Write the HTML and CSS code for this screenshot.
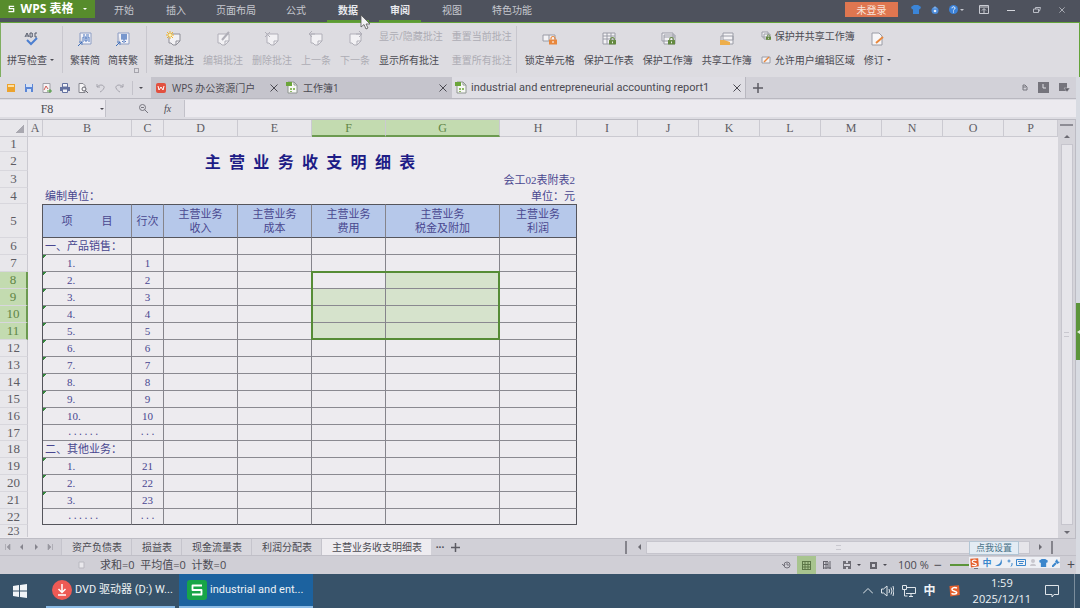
FILE: index.html
```html
<!DOCTYPE html>
<html lang="zh-CN">
<head>
  <meta charset="UTF-8">
  <meta name="viewport" content="width=device-width, initial-scale=1.0">
  <title>WPS 表格</title>
  <link rel="stylesheet" href="styles.css">
</head>
<body>
<svg class="sprite" aria-hidden="true">
  <symbol id="i-note" viewBox="0 0 16 16">
    <path d="M3 3h11v7l-4 4H7l-2-2H3z" fill="#f2f1f4" stroke="currentColor"/>
    <path d="M14 10h-4v4" fill="none" stroke="currentColor"/>
  </symbol>
  <symbol id="i-lock" viewBox="0 0 8 9">
    <path d="M2 4V3a2 2 0 0 1 4 0v1" fill="none" stroke="currentColor" stroke-width="1.2"/>
    <path d="M0 4h8v5H0z" fill="currentColor"/>
    <path d="M3.5 5.5h1v2h-1z" fill="#fff"/>
  </symbol>
  <symbol id="i-close" viewBox="0 0 8 8">
    <path d="M.5.5l7 7M7.5.5l-7 7" stroke="currentColor" fill="none"/>
  </symbol>
  <symbol id="i-sheet" viewBox="0 0 12 13">
    <path d="M2 1h6l3 3v8H2z" fill="#f7f8f5" stroke="#8f9690"/>
    <path d="M8 1v3h3" fill="none" stroke="#8f9690"/>
    <path d="M0 1h6v4H0z" fill="#6ba53a"/>
    <path d="M4 7h2v2H4zM7 7h2v2H7zM4 10h2v1H4z" fill="#8ebb62"/>
  </symbol>
  <symbol id="i-sogou" viewBox="0 0 12 12">
    <path d="M1.500 1l9.500-.8.800 9.800-9.500 1.500z" fill="#e5602d"/>
    <path d="M9 3C6 2 3.500 3 4 4.700S9 6 8.800 7.700 5.500 9.500 3.500 8.300" fill="none" stroke="#fff" stroke-width="1.500"/>
  </symbol>
</svg>

<header class="titlebar">
  <button class="brand"><svg class="brand-logo" viewBox="0 0 8 8"><path d="M7 1H1.500v2.500h5V7H.500" fill="none" stroke="#fff" stroke-width="1.400"/></svg>WPS 表格<i class="caret"></i></button>
  <nav class="menu">
    <button>开始</button>
    <button>插入</button>
    <button class="wide">页面布局</button>
    <button>公式</button>
    <button class="lit">数据</button>
    <button class="lit">审阅</button>
    <button>视图</button>
    <button class="wide">特色功能</button>
  </nav>
  <button class="login">未登录</button>
  <div class="title-tools">
    <button aria-label="皮肤"><svg width="10" height="9" viewBox="0 0 10 9"><path d="M3 0h4l3 2-1 2.500-1-.5v5H2V4l-1 .5L0 2z" fill="#3b85d8"/></svg></button>
    <button aria-label="云服务"><svg width="8" height="8" viewBox="0 0 8 8"><circle cx="4" cy="4.500" r="3.500" fill="#4b8ad8"/><path d="M2 2.500L4 0l2 2.500z" fill="#7fb0ea"/><circle cx="4" cy="5" r="1.300" fill="#e6effa"/></svg></button>
    <button aria-label="帮助" class="help"><svg width="9" height="9" viewBox="0 0 9 9"><circle cx="4.500" cy="4.500" r="4.500" fill="#3c82d8"/><path d="M3 3.300c0-2 3-2 3 0 0 1-1.500 1-1.500 2.200M4.500 6.500v1" stroke="#fff" fill="none"/></svg><i class="caret"></i></button>
  </div>
  <div class="window-tools">
    <button aria-label="隐藏功能区"><svg width="10" height="9" viewBox="0 0 10 9"><path d="M.500.500h9v8h-9zM.500 2h9M5 8V4M3 5.500L5 3.500l2 2" fill="none" stroke="#c9cbd2"/></svg></button>
    <button aria-label="最小化"><svg width="8" height="8" viewBox="0 0 8 8"><path d="M0 4.500h8" stroke="#d4d6dc"/></svg></button>
    <button aria-label="还原"><svg width="8" height="6" viewBox="0 0 8 6"><path d="M2.500 2V.500h5L6.500 4H5M.500 2h5v3.500h-5z" fill="none" stroke="#b9bcc5"/></svg></button>
    <button aria-label="关闭"><svg width="6" height="6"><use href="#i-close"/></svg></button>
  </div>
  <svg class="pointer" viewBox="0 0 11 16"><path d="M1 1v12l3-2.500L6 15l2-1-2-4h4z" fill="#f3f3f5" stroke="#555" stroke-width=".8"/></svg>
</header>

<section class="ribbon">
  <div class="group">
    <button class="tool"><svg viewBox="0 0 16 16"><path d="M2 6l2-4 2 4M3 5h2M7 2v4h2q1-1 0-2 1-1 0-2H7M14 2h-2v4h2" fill="none" stroke="#555b6b"/><path d="M4 9l4 4 6-6" fill="none" stroke="#4c7fd0" stroke-width="2"/></svg><span>拼写检查<i class="caret"></i></span></button>
  </div>
  <div class="group convert">
    <button class="tool"><svg viewBox="0 0 16 16"><path d="M3 2h11v11H6M3 2v8" fill="#f2f2f8" stroke="#8d9ec4"/><path d="M6 4h2M9 4h3M6 6h6M6 6v5M12 6v5M8 7h2v3H8z" fill="none" stroke="#4f78bf"/><path d="M1 15l4-4M2 11h3v3" fill="none" stroke="#3d6db8"/></svg><span>繁转简</span></button>
    <button class="tool"><svg viewBox="0 0 16 16"><path d="M3 2h11v11H6M3 2v8" fill="#f2f2f8" stroke="#8d9ec4"/><path d="M6 4h6M6 6h6M6 8h6M9 3v9M7 3v5M11 3v5M7 11l1-1M11 11l-1-1" fill="none" stroke="#4f78bf"/><path d="M1 15l4-4M2 11h3v3" fill="none" stroke="#3d6db8"/></svg><span>简转繁</span></button>
    <i class="launcher"></i>
  </div>
  <div class="group notes">
    <button class="tool"><svg viewBox="0 0 16 16"><use href="#i-note"/><path d="M4 0v8M0 4h8M1 1l6 6M7 1L1 7" stroke="#f0b52c"/><circle cx="4" cy="4" r="1.500" fill="#fff3ae"/></svg><span>新建批注</span></button>
    <button class="tool" disabled><svg viewBox="0 0 16 16"><use href="#i-note"/><path d="M7 9l7-8" stroke="currentColor" stroke-width="2"/></svg><span>编辑批注</span></button>
    <button class="tool" disabled><svg viewBox="0 0 16 16"><use href="#i-note"/><path d="M1 1l5 5M6 1L1 6" stroke="currentColor"/></svg><span>删除批注</span></button>
    <button class="tool" disabled><svg viewBox="0 0 16 16"><use href="#i-note"/><path d="M1 3h6M1 3l3-3M1 3l3 3" stroke="currentColor"/></svg><span>上一条</span></button>
    <button class="tool" disabled><svg viewBox="0 0 16 16"><use href="#i-note"/><path d="M9 3h6M15 3l-3-3M15 3l-3 3" stroke="currentColor"/></svg><span>下一条</span></button>
    <div class="stack">
      <button disabled>显示/隐藏批注</button>
      <button>显示所有批注</button>
    </div>
    <div class="stack">
      <button disabled>重置当前批注</button>
      <button disabled>重置所有批注</button>
    </div>
  </div>
  <div class="group protect">
    <button class="tool"><svg viewBox="0 0 16 16"><path d="M1 4h12v6H1zM7 4v6" fill="#f4f3f6" stroke="#9a9ca6"/><use href="#i-lock" x="7" y="4" width="8" height="10" color="#e8873c"/></svg><span>锁定单元格</span></button>
    <button class="tool"><svg viewBox="0 0 16 16"><path d="M2 2h12v11H2zM2 5h12M2 8h12M6 2v11M10 2v11" fill="#f4f3f6" stroke="#9a9ca6"/><use href="#i-lock" x="8" y="5" width="7" height="9" color="#63893f"/></svg><span>保护工作表</span></button>
    <button class="tool"><svg viewBox="0 0 16 16"><path d="M2 2h11v8H2zM4 4h11v9H4zM4 6h11" fill="#f4f3f6" stroke="#9a9ca6"/><use href="#i-lock" x="8" y="5" width="7" height="9" color="#63893f"/></svg><span>保护工作簿</span></button>
    <button class="tool"><svg viewBox="0 0 16 16"><path d="M4 2h10v7H4zM2 5h12v8H2z" fill="#f4f3f6" stroke="#9a9ca6"/><path d="M1 9h4l6 2v3H1z" fill="#edae4b"/></svg><span>共享工作簿</span></button>
    <div class="stack">
      <button><svg viewBox="0 0 10 10"><path d="M1 1h6v5H1zM3 3h6v5H3z" fill="#f4f3f6" stroke="#9a9ca6"/><use href="#i-lock" x="5" y="3" width="5" height="6" color="#63893f"/></svg>保护并共享工作簿</button>
      <button><svg viewBox="0 0 10 10"><path d="M1 2h8v6H1z" fill="#f4f3f6" stroke="#9a9ca6"/><path d="M3 7l5-5" stroke="#e8873c" stroke-width="1.500"/></svg>允许用户编辑区域</button>
    </div>
    <button class="tool"><svg viewBox="0 0 16 16"><path d="M3 2h7l3 3v9H3z" fill="#f7f6f8" stroke="#9a9ca6"/><path d="M7 12l7-6" stroke="#e8873c" stroke-width="2"/></svg><span>修订<i class="caret"></i></span></button>
  </div>
</section>

<div class="workspace">
  <main class="book">
    <div class="docbar">
      <div class="quick">
        <button aria-label="打开"><svg viewBox="0 0 10 10"><path d="M1 1h8v8H1z" fill="#eca32e"/><path d="M2 2h6v2H2z" fill="#fbe0a6"/></svg></button>
        <button aria-label="保存"><svg viewBox="0 0 10 10"><path d="M1 1h8v8H1z" fill="#5b86d6"/><path d="M2 1h6v3H2zM3 6h4v3H3z" fill="#d5e0f4"/></svg></button>
        <button aria-label="输出为PDF"><svg viewBox="0 0 10 10"><path d="M1 .500h7v9H1z" fill="#f6f3f5" stroke="#a0a0a8"/><path d="M2 7l2-4 2 3" fill="none" stroke="#cf5b54"/><path d="M5 8h5M8 6v4" stroke="#4c9b3d"/></svg></button>
        <button aria-label="打印"><svg viewBox="0 0 10 10"><path d="M0 4h10v4H0z" fill="#6472a0"/><path d="M2.500.500h5V4h-5zM2.500 6h5v3.500h-5z" fill="#f2f3f8" stroke="#6472a0"/></svg></button>
        <button aria-label="打印预览"><svg viewBox="0 0 10 10"><path d="M1 .500h4l2 2v7H1z" fill="#f5f4f6" stroke="#86868e"/><circle cx="6" cy="6" r="2" fill="#f5f4f6" stroke="#66666e"/><path d="M7.500 7.500L10 10" stroke="#66666e"/></svg></button>
        <button aria-label="撤销"><svg viewBox="0 0 10 10"><path d="M1 4c4-4 8-1 7 1S6 8 4 9M1 1v3h3" fill="none" stroke="#a5a4ad"/></svg></button>
        <button aria-label="恢复"><svg viewBox="0 0 10 10"><path d="M9 4C5 0 1 3 2 5s2 3 4 4M9 1v3H6" fill="none" stroke="#a5a4ad"/></svg></button>
        <button class="more" aria-label="更多"><i class="caret"></i></button>
      </div>
      <div class="doc-tab portal"><svg width="10" height="10" viewBox="0 0 10 10"><rect width="10" height="10" rx="2" fill="#e2503f"/><path d="M2 3l1 4 2-3 2 3 1-4" fill="none" stroke="#fff"/></svg><a href="#">WPS 办公资源门户</a><button aria-label="关闭"><svg width="8" height="8"><use href="#i-close"/></svg></button></div>
      <div class="doc-tab book1"><svg width="12" height="13"><use href="#i-sheet"/></svg><a href="#">工作簿1</a><button aria-label="关闭"><svg width="8" height="8"><use href="#i-close"/></svg></button></div>
      <div class="doc-tab active"><svg width="12" height="13"><use href="#i-sheet"/></svg><a href="#">industrial and entrepreneurial accounting report1</a><button aria-label="关闭"><svg width="8" height="8"><use href="#i-close"/></svg></button></div>
      <button class="new-doc" aria-label="新建"><svg width="10" height="10" viewBox="0 0 10 10"><path d="M5 0v10M0 5h10" stroke="#5c5b63" stroke-width="1.500"/></svg></button>
      <div class="doc-tools">
        <svg width="6" height="7" viewBox="0 0 6 7"><path d="M1 1h2l2 2v3H1zM1 3h3" fill="none" stroke="#77767e"/></svg>
        <svg width="11" height="11" viewBox="0 0 11 11"><path d="M0 0h11v11H0z" fill="#75747c"/><path d="M5 2v4h3" fill="none" stroke="#e2e1e6"/></svg>
        <svg width="11" height="10" viewBox="0 0 11 10"><path d="M0 0h8v8H0z" fill="#75747c"/><path d="M5 5h6l-3 4z" fill="#5e5d65" stroke="#d5d4da" stroke-width=".5"/></svg>
      </div>
    </div>

    <div class="formula">
      <div class="name-box"><input aria-label="名称框" value="F8"><i class="caret"></i></div>
      <div class="fx">
        <button aria-label="查找"><svg width="9" height="9" viewBox="0 0 9 9"><circle cx="3.500" cy="3.500" r="3" fill="none" stroke="#77767f"/><path d="M2 3.500h3M5.500 5.500L9 9" stroke="#77767f"/></svg></button>
        <button class="fn">fx</button>
      </div>
      <input class="formula-input" aria-label="编辑栏">
    </div>

    <div class="grid-area">
      <div class="grid">
        <table>
          <colgroup>
            <col class="c-head"><col class="c-a"><col class="c-b"><col class="c-c"><col class="c-d"><col class="c-d"><col class="c-d"><col class="c-g"><col class="c-h">
            <col span="7" class="c-i"><col>
          </colgroup>
          <thead>
            <tr><th class="corner"></th><th>A</th><th>B</th><th>C</th><th>D</th><th>E</th><th class="picked">F</th><th class="picked">G</th><th>H</th><th>I</th><th>J</th><th>K</th><th>L</th><th>M</th><th>N</th><th>O</th><th>P</th></tr>
          </thead>
          <tbody class="caption">
            <tr class="r1"><th>1</th><td></td><td colspan="7"></td></tr>
            <tr class="r2"><th>2</th><td></td><td colspan="7" class="sheet-title">主&nbsp; 营&nbsp; 业&nbsp; 务&nbsp; 收&nbsp; 支&nbsp; 明&nbsp; 细&nbsp; 表</td></tr>
            <tr><th>3</th><td></td><td colspan="7" class="right">会工02表附表2</td></tr>
            <tr class="r4"><th>4</th><td></td><td colspan="3" class="left">编制单位：</td><td colspan="4" class="right">单位：元</td></tr>
          </tbody>
          <tbody class="ledger">
            <tr class="fields"><th>5</th><td></td><td>项<i class="blank"></i>目</td><td>行次</td><td>主营业务<br>收入</td><td>主营业务<br>成本</td><td>主营业务<br>费用</td><td>主营业务<br>税金及附加</td><td>主营业务<br>利润</td></tr>
            <tr><th>6</th><td></td><td class="section">一、产品销售：</td><td></td><td></td><td></td><td></td><td></td><td></td></tr>
            <tr><th>7</th><td></td><td class="item flag">1.</td><td>1</td><td></td><td></td><td></td><td></td><td></td></tr>
            <tr><th class="picked">8</th><td></td><td class="item flag">2.</td><td>2</td><td></td><td></td><td class="current"><div class="range"></div></td><td class="in-range"></td><td></td></tr>
            <tr><th class="picked">9</th><td></td><td class="item flag">3.</td><td>3</td><td></td><td></td><td class="in-range"></td><td class="in-range"></td><td></td></tr>
            <tr><th class="picked">10</th><td></td><td class="item flag">4.</td><td>4</td><td></td><td></td><td class="in-range"></td><td class="in-range"></td><td></td></tr>
            <tr><th class="picked">11</th><td></td><td class="item flag">5.</td><td>5</td><td></td><td></td><td class="in-range"></td><td class="in-range"></td><td></td></tr>
            <tr><th>12</th><td></td><td class="item flag">6.</td><td>6</td><td></td><td></td><td></td><td></td><td></td></tr>
            <tr><th>13</th><td></td><td class="item flag">7.</td><td>7</td><td></td><td></td><td></td><td></td><td></td></tr>
            <tr><th>14</th><td></td><td class="item flag">8.</td><td>8</td><td></td><td></td><td></td><td></td><td></td></tr>
            <tr><th>15</th><td></td><td class="item flag">9.</td><td>9</td><td></td><td></td><td></td><td></td><td></td></tr>
            <tr><th>16</th><td></td><td class="item flag">10.</td><td>10</td><td></td><td></td><td></td><td></td><td></td></tr>
            <tr class="etc"><th>17</th><td></td><td class="item">......</td><td>...</td><td></td><td></td><td></td><td></td><td></td></tr>
            <tr><th>18</th><td></td><td class="section">二、其他业务：</td><td></td><td></td><td></td><td></td><td></td><td></td></tr>
            <tr><th>19</th><td></td><td class="item flag">1.</td><td>21</td><td></td><td></td><td></td><td></td><td></td></tr>
            <tr><th>20</th><td></td><td class="item flag">2.</td><td>22</td><td></td><td></td><td></td><td></td><td></td></tr>
            <tr><th>21</th><td></td><td class="item flag">3.</td><td>23</td><td></td><td></td><td></td><td></td><td></td></tr>
            <tr class="etc"><th>22</th><td></td><td class="item">......</td><td>...</td><td></td><td></td><td></td><td></td><td></td></tr>
          </tbody>
          <tbody class="tail">
            <tr><th>23</th></tr>
          </tbody>
        </table>
      </div>
      <div class="vscroll">
        <i class="split"></i>
        <i class="arrow up"></i>
        <div class="thumb"><i class="grip"></i></div>
        <i class="arrow down"></i>
      </div>
    </div>

    <div class="sheetbar">
      <div class="sheet-nav">
        <button aria-label="第一张"><svg viewBox="0 0 6 6"><path d="M.500 0v6M2 3l3-3v6z" fill="#9897a0" stroke="#9897a0" stroke-width=".6"/></svg></button>
        <button aria-label="上一张"><svg viewBox="0 0 6 6"><path d="M1 3l3-3v6z" fill="#85848d"/></svg></button>
        <button aria-label="下一张"><svg viewBox="0 0 6 6"><path d="M5 3L2 0v6z" fill="#85848d"/></svg></button>
        <button aria-label="最后一张"><svg viewBox="0 0 6 6"><path d="M5.500 0v6M4 3L1 0v6z" fill="#9897a0" stroke="#9897a0" stroke-width=".6"/></svg></button>
      </div>
      <button class="sheet-tab">资产负债表</button>
      <button class="sheet-tab">损益表</button>
      <button class="sheet-tab">现金流量表</button>
      <button class="sheet-tab">利润分配表</button>
      <button class="sheet-tab active">主营业务收支明细表</button>
      <button class="sheet-more">···</button>
      <button class="sheet-add" aria-label="新建工作表"><svg width="9" height="9" viewBox="0 0 9 9"><path d="M4.500 0v9M0 4.500h9" stroke="#5c5b63" stroke-width="1.500"/></svg></button>
      <div class="hscroll">
        <i class="bar"></i>
        <i class="arrow prev"></i>
        <div class="track"><i class="grip"></i></div>
        <i class="arrow next"></i>
        <i class="bar"></i>
      </div>
      <span class="ime-tip">点我设置</span>
    </div>

    <div class="status">
      <svg width="7" height="8" viewBox="0 0 7 8"><path d="M1 1h5v6H1z" fill="#e9e8ec" stroke="#b9b8c0"/></svg>
      <span class="sums">求和=0&nbsp; 平均值=0&nbsp; 计数=0</span>
      <div class="views">
        <button aria-label="历史版本"><svg width="9" height="8" viewBox="0 0 9 8"><circle cx="5" cy="4" r="3" fill="none" stroke="#74737c"/><path d="M0 3l2 2 1-2M5 2v2h2" fill="none" stroke="#74737c"/></svg></button>
        <button class="on" aria-label="普通视图"><svg width="9" height="9" viewBox="0 0 9 9"><path d="M0 .500h9M0 3.500h9M0 6h9M0 8.500h9M.500 0v9M3 0v9M6 0v9M8.500 0v9" stroke="#5c7747"/></svg></button>
        <button aria-label="分页预览"><svg width="8" height="8" viewBox="0 0 8 8"><path d="M0 .500h5M0 3.500h5M0 7h8M.500 0v8M3 0v8M7 0v8M5 1v6" stroke="#65646c"/></svg></button>
        <button aria-label="阅读模式"><svg width="8" height="8" viewBox="0 0 8 8"><path d="M0 0h8v8H0z" fill="#6f6e76"/><path d="M3 0h2v2H3zM3 6h2v2H3zM1 3h6v2H1z" fill="#d4d3da"/></svg><i class="caret"></i></button>
        <button aria-label="页面布局"><svg width="7" height="7" viewBox="0 0 7 7"><path d="M1 1h5v5H1z" fill="none" stroke="#65646c" stroke-width="2"/></svg><i class="caret"></i></button>
      </div>
      <label class="zoom" for="zoom">100 %</label>
      <button class="step">−</button>
      <input id="zoom" type="range" min="10" max="400" value="100">
      <button class="step">+</button>
      <div class="ime-bar">
        <svg width="10" height="10"><use href="#i-sogou" width="10" height="10"/></svg>
        <span>中</span>
        <svg width="8" height="8" viewBox="0 0 8 8"><path d="M6 0c3 5-2 9-6 6 4 0 6-2 6-6z" fill="#3b86cc"/></svg>
        <svg width="6" height="8" viewBox="0 0 6 8"><circle cx="2" cy="2" r="1" fill="none" stroke="#3b86cc"/><path d="M5 4v2L4 7.500" fill="none" stroke="#3b86cc"/></svg>
        <svg width="10" height="7" viewBox="0 0 10 7"><path d="M.500.500h9v6h-9zM2 2.500h6M3 4.500h4" fill="none" stroke="#3b86cc"/></svg>
        <svg width="6" height="8" viewBox="0 0 6 8"><circle cx="3" cy="2" r="2" fill="#c8c7ce"/><path d="M0 7c0-3 6-3 6 0z" fill="#c8c7ce"/></svg>
        <svg width="9" height="8" viewBox="0 0 10 9"><path d="M3 0h4l3 2-1 2.500-1-.5v5H2V4l-1 .5L0 2z" fill="#3b86cc"/></svg>
        <svg width="8" height="8" viewBox="0 0 8 8"><path d="M0 8l4-4" stroke="#3b86cc" stroke-width="2"/><path d="M5 0L3 2.500 5.500 5 8 3 6 2.500z" fill="#3b86cc"/></svg>
      </div>
    </div>
  </main>
  <aside class="side"><button aria-label="展开任务窗格"><svg width="3" height="4" viewBox="0 0 3 4"><path d="M0 2l3-2v4z" fill="#e6f0dd"/></svg></button></aside>
</div>

<footer class="taskbar">
  <button class="start" aria-label="开始"><svg width="14" height="14" viewBox="0 0 14 14"><path d="M0 2l6-1v5.500H0zM7 1l7-1v6.500H7zM0 7.500h6V13l-6-1zM7 7.500h7V14l-7-1z" fill="#f1f4f7"/></svg></button>
  <button class="task"><svg width="20" height="20" viewBox="0 0 20 20"><circle cx="10" cy="10" r="10" fill="#ee5a55"/><path d="M10 4v8M6.500 9l3.500 3.500L13.500 9M6 15h8" fill="none" stroke="#fff" stroke-width="1.500"/></svg><span>DVD 驱动器 (D:) W...</span></button>
  <button class="task current-task"><svg width="20" height="20" viewBox="0 0 20 20"><rect width="20" height="20" rx="3" fill="#18a548"/><path d="M15 5.500H5.500V10h9v4.500H5" fill="none" stroke="#fff" stroke-width="1.800" stroke-linejoin="round"/></svg><span>industrial and ent...</span></button>
  <div class="tray">
    <svg width="10" height="6" viewBox="0 0 10 6"><path d="M0 5.500l5-5 5 5" fill="none" stroke="#dfe5ea"/></svg>
    <svg width="13" height="12" viewBox="0 0 13 12"><path d="M.500 4h2L6 1v10L2.500 8h-2zM8 4q1 2 0 4M10 2.500q2 3.500 0 7M12 1q2 5 0 10" fill="none" stroke="#dfe5ea"/></svg>
    <svg width="14" height="12" viewBox="0 0 14 12"><path d="M5 2.500h8.500v6H4M7 11.500h4M9 9v2M.500.500h4v4h-4zM2.500 5v6h3" fill="none" stroke="#dfe5ea"/></svg>
    <span class="ime">中</span>
    <svg class="sogou" width="12" height="12"><use href="#i-sogou"/></svg>
    <time>1:59<br>2025/12/11</time>
    <svg width="14" height="14" viewBox="0 0 14 14"><path d="M.500 1.500h13v9H9l-2 2.500V10.500H.500z" fill="none" stroke="#dfe5ea"/></svg>
    <i class="peek"></i>
  </div>
</footer>
</body>
</html>
```

FILE: styles.css
```css
* {
  box-sizing: border-box;
}
html, body {
  margin: 0;
  height: 100vh;
}
body {
  display: flex;
  flex-direction: column;
  overflow: hidden;
  background-color: #dad9df;
  color: #4b4a52;
  font-family: "Open Sans", "Noto Sans CJK SC", sans-serif;
  font-size: 10px;
  line-height: 14px;
}
button, input {
  margin: 0;
  padding: 0;
  border: none;
  background: none;
  color: inherit;
  font: inherit;
  white-space: nowrap;
}
button {
  display: flex;
  align-items: center;
  justify-content: center;
  flex: none;
  cursor: pointer;
}
svg {
  flex: none;
  display: block;
}
a {
  color: inherit;
  text-decoration: none;
}
.sprite {
  position: absolute;
  width: 0;
  height: 0;
}
.caret {
  display: inline-block;
  border: 2px solid transparent;
  border-top-color: currentColor;
  border-bottom: none;
}

/* title bar */
.titlebar {
  position: relative;
  display: flex;
  align-items: center;
  height: 23px;
  flex: none;
  background-color: #4e525d;
  border-bottom: 1px solid #64a33a;
  color: #c6c8cf;
}
.brand {
  align-self: flex-start;
  height: 18px;
  width: 95px;
  gap: 6px;
  background-color: #578c2c;
  color: #fff;
  font-size: 12px;
  font-weight: bold;
}
.brand-logo {
  width: 7px;
  height: 8px;
}
.brand .caret {
  margin-left: 4px;
}
.menu {
  display: flex;
  align-self: stretch;
  padding-left: 8px;
  gap: 10px;
}
.menu button {
  width: 42px;
  border-bottom: 2px solid transparent;
}
.menu .wide {
  width: 58px;
}
.menu .lit {
  color: #e8e9ed;
  font-weight: bold;
  border-color: #5c9a33;
}
.login {
  width: 53px;
  height: 15px;
  margin: 0 13px 3px auto;
  background-color: #df7650;
  color: #f9e4db;
}
.title-tools, .window-tools {
  display: flex;
  align-items: center;
  gap: 10px;
  padding-bottom: 3px;
}
.title-tools {
  padding-right: 15px;
}
.help {
  gap: 2px;
}
.window-tools {
  gap: 18px;
  padding-right: 15px;
}
.pointer {
  position: absolute;
  left: 360px;
  top: 14px;
  width: 11px;
  height: 16px;
  z-index: 2;
}

/* ribbon */
.ribbon {
  display: flex;
  height: 54px;
  flex: none;
  padding: 3px 0 4px;
  background-color: #dddce1;
  border-left: 1px solid #7fae60;
  border-right: 1px solid #64a33a;
}
.group {
  position: relative;
  display: flex;
  align-items: stretch;
  gap: 8px;
  padding: 0 8px 0 6px;
  border-right: 1px solid #c8c7ce;
}
.convert {
  padding: 0 8px 0 7px;
}
.notes {
  gap: 9px;
  padding: 0 4px 0 7px;
}
.protect {
  gap: 9px;
  padding-left: 8px;
  border-right: none;
}
.tool {
  flex-direction: column;
  justify-content: flex-start;
  gap: 6px;
  padding-top: 5px;
}
.tool svg {
  width: 16px;
  height: 16px;
  color: #8f8f98;
}
.tool .caret {
  margin: 0 0 3px 3px;
}
.tool:disabled, .stack button:disabled {
  color: #adacb4;
}
.tool:disabled svg {
  color: #b0afb8;
}
.launcher {
  position: absolute;
  right: 7px;
  bottom: 0;
  width: 5px;
  height: 5px;
  border: 1px solid #a5a4ac;
}
.stack {
  display: flex;
  flex-direction: column;
  gap: 10px;
  padding-top: 3px;
}
.stack button {
  justify-content: flex-start;
  gap: 4px;
}
.stack svg {
  width: 10px;
  height: 10px;
}

/* workspace */
.workspace {
  display: flex;
  flex: 1;
  min-height: 0;
}
.book {
  display: flex;
  flex-direction: column;
  flex: 1;
  min-width: 0;
}
.side {
  display: flex;
  align-items: center;
  width: 4px;
  padding-top: 12px;
  background-color: #d8dbe2;
}
.side button {
  width: 4px;
  height: 57px;
  background-color: #5c943a;
}

/* document tabs */
.docbar {
  display: flex;
  height: 22px;
  flex: none;
  background-color: #d2d1d8;
  border-bottom: 1px solid #b9b8c0;
}
.quick {
  display: flex;
  align-items: center;
  gap: 8px;
  width: 151px;
  padding-left: 6px;
  background-color: #dcdbe1;
}
.quick svg {
  width: 10px;
  height: 10px;
}
.more {
  height: 14px;
  padding-left: 6px;
  border-left: 1px solid #c3c2ca;
}
.doc-tab {
  display: flex;
  align-items: center;
  gap: 6px;
  padding: 0 5px;
  background-color: #c5c4cc;
}
.doc-tab button {
  margin-left: auto;
}
.portal {
  width: 132px;
}
.book1 {
  width: 169px;
  padding-left: 3px;
  gap: 5px;
}
.doc-tab.active {
  width: 294px;
  padding: 0 4px 0 3px;
  gap: 4px;
  background-color: #dfdee4;
  border-right: 1px solid #b9b8c0;
  font-family: Roboto, sans-serif;
  font-size: 11px;
}
.new-doc {
  width: 24px;
}
.doc-tools {
  display: flex;
  align-items: center;
  gap: 10px;
  margin-left: auto;
  padding-right: 6px;
}

/* formula bar */
.formula {
  display: flex;
  height: 21px;
  flex: none;
  padding: 1px 0 2px;
  background-color: #dddce2;
  border-bottom: 1px solid #bbbac2;
}
.name-box {
  display: flex;
  align-items: center;
  width: 106px;
  background-color: #eceaef;
  border-right: 1px solid #c2c1c9;
}
.name-box input {
  width: 94px;
  text-align: center;
  font-family: "Liberation Serif", serif;
  font-size: 12px;
}
.name-box .caret {
  margin-left: 6px;
}
.fx {
  display: flex;
  align-items: center;
  justify-content: center;
  gap: 16px;
  width: 79px;
  padding-left: 20px;
  border-right: 1px solid #c2c1c9;
}
.fn {
  font-family: "Liberation Serif", serif;
  font-style: italic;
}
.formula-input {
  flex: 1;
  background-color: #eceaef;
}

/* sheet */
.grid-area {
  display: flex;
  flex: 1;
  min-height: 0;
}
.grid {
  flex: 1;
  overflow: hidden;
  background-color: #edebef;
}
table {
  width: 100%;
  table-layout: fixed;
  border-spacing: 0;
  color: #49478f;
  font-family: "Liberation Serif", "Noto Sans CJK SC", serif;
  font-size: 11px;
  line-height: 14px;
}
.c-head {
  width: 28px;
}
.c-a {
  width: 15px;
}
.c-b {
  width: 89px;
}
.c-c {
  width: 32px;
}
.c-d {
  width: 74px;
}
.c-g {
  width: 114px;
}
.c-h {
  width: 77px;
}
.c-i {
  width: 61px;
}
th, td {
  height: 17px;
  padding: 0;
  text-align: center;
  white-space: nowrap;
}
th {
  background-color: #e8e7eb;
  border-right: 1px solid #cbcad1;
  border-bottom: 1px solid #cbcad1;
  color: #5d5c63;
  font-size: 13px;
  font-weight: normal;
}
thead th {
  font-size: 12px;
}
tbody th {
  border-bottom-color: #d8d7dd;
}
.corner {
  background-image: linear-gradient(135deg, transparent 50%, #a9a8b0 50%);
  background-size: 9px 9px;
  background-position: 15px 4px;
  background-repeat: no-repeat;
}
.picked {
  background-color: #c3dbb0;
  color: #5f8545;
}
thead .picked {
  border-bottom: 2px solid #6c9a50;
}
tbody .picked {
  border-right: 2px solid #6c9a50;
}
.r1 > * {
  height: 15px;
}
.r2 > * {
  height: 19px;
}
.r4 > * {
  height: 16px;
}
.sheet-title {
  color: #1d1c86;
  font-family: "Open Sans", "Noto Sans CJK SC", sans-serif;
  font-size: 16px;
  font-weight: bold;
}
.left {
  padding-left: 2px;
  text-align: left;
}
.right {
  padding-right: 2px;
  text-align: right;
}
.ledger td {
  border-right: 1px solid #85848b;
  border-bottom: 1px solid #8a8990;
}
.ledger td:nth-child(2), .ledger td:last-child {
  border-right-color: #55555c;
}
.ledger td:nth-child(2) {
  border-bottom: none;
}
.ledger .fields > * {
  height: 34px;
}
.fields td:nth-child(n+3) {
  background-color: #b6c8ea;
  border-top: 1px solid #55555c;
  border-bottom-color: #55555c;
}
.ledger tr:last-child td:nth-child(n+3) {
  border-bottom-color: #55555c;
}
.blank {
  display: inline-block;
  width: 29px;
}
.ledger .section {
  padding-left: 2px;
  text-align: left;
}
.ledger .item {
  padding-left: 24px;
  text-align: left;
}
.flag {
  background-image: linear-gradient(135deg, #33853b 50%, transparent 50%);
  background-size: 4px 4px;
  background-repeat: no-repeat;
}
.etc > * {
  height: 16px;
}
.etc td {
  font-family: "Liberation Mono", monospace;
  font-size: 9px;
}
.tail th {
  height: 12px;
  border-bottom: none;
  font-size: 12px;
  line-height: 12px;
}
.current {
  position: relative;
}
.in-range {
  background-color: #d6e3cc;
}
/* selection frame, spans F8:G11 */
.range {
  position: absolute;
  left: -1px;
  top: -1px;
  width: 189px;
  height: 69px;
  border: 2px solid #568c36;
}
.vscroll {
  display: flex;
  flex-direction: column;
  align-items: center;
  gap: 6px;
  width: 18px;
  padding: 4px 0;
  background-color: #d5d4da;
  border-right: 1px solid #bdbcc4;
}
.split {
  width: 13px;
  height: 2px;
  background-color: #8e8d95;
}
.arrow {
  border: 3px solid transparent;
}
.up {
  margin-top: 3px;
  border-bottom-color: #6c6b73;
  border-top: none;
}
.down {
  border-top-color: #6c6b73;
  border-bottom: none;
}
.prev {
  border-right-color: #6c6b73;
  border-left: none;
}
.next {
  border-left-color: #6c6b73;
  border-right: none;
}
.thumb {
  display: flex;
  align-items: center;
  justify-content: center;
  flex: 1;
  width: 12px;
  background-color: #e6e5ea;
  border: 1px solid #c6c5cd;
}
.grip {
  width: 5px;
  height: 5px;
  border: 1px solid #c9c8cf;
  border-width: 1px 0;
}

/* sheet tabs */
.sheetbar {
  position: relative;
  display: flex;
  height: 18px;
  flex: none;
  background-color: #d1d0d7;
  border-top: 1px solid #bdbcc4;
  border-bottom: 1px solid #c0bfc7;
}
.sheet-nav {
  display: flex;
  align-items: center;
  gap: 8px;
  width: 61px;
  padding-left: 5px;
}
.sheet-nav svg {
  width: 6px;
  height: 6px;
}
.sheet-tab {
  padding: 0 9px 0 10px;
  background-color: #d8d7dd;
  border-left: 1px solid #c5c4cc;
}
.sheet-tab.active {
  background-color: #eeecf0;
}
.sheet-more {
  width: 18px;
  font-weight: bold;
}
.sheet-add {
  width: 12px;
}
.hscroll {
  display: flex;
  align-items: center;
  width: 451px;
  gap: 11px;
  margin-left: auto;
  padding-right: 23px;
}
.bar {
  width: 2px;
  height: 13px;
  background-color: #85848c;
}
.hscroll .prev {
  margin-right: -6px;
}
.hscroll .next {
  margin-left: -2px;
  margin-right: -2px;
}
.track {
  display: flex;
  align-items: center;
  justify-content: center;
  flex: 1;
  height: 13px;
  background-color: #e6e5ea;
  border: 1px solid #c6c5cd;
}
.ime-tip {
  position: absolute;
  right: 57px;
  top: 2px;
  width: 50px;
  background-color: #e3ecf4;
  border: 1px solid #b3c6d5;
  color: #487287;
  font-size: 9px;
  line-height: 12px;
  text-align: center;
}

/* status bar */
.status {
  position: relative;
  display: flex;
  align-items: center;
  height: 18px;
  flex: none;
  padding: 0 1px 0 78px;
  background-color: #d0cfd6;
}
.sums {
  margin-left: 15px;
  font-size: 11px;
}
.views {
  display: flex;
  align-self: stretch;
  margin-left: auto;
}
.views button {
  width: 22px;
  gap: 6px;
}
.views button:nth-child(n+4) {
  width: 27px;
}
.views .on {
  width: 19px;
  background-color: #a8c48f;
}
.zoom {
  width: 36px;
  margin-left: 6px;
  font-size: 11px;
}
.step {
  width: 8px;
  font-size: 14px;
}
#zoom {
  appearance: none;
  width: 109px;
  height: 2px;
  margin: 0 8px;
  background-color: #5c943a;
}
#zoom::-webkit-slider-thumb {
  appearance: none;
  width: 4px;
  height: 8px;
  background-color: #77767e;
}
.ime-bar {
  position: absolute;
  right: 16px;
  top: 1px;
  display: flex;
  align-items: center;
  justify-content: space-between;
  width: 91px;
  height: 11px;
  background-color: #eef0f5;
  color: #3b86cc;
  font-size: 9px;
  font-weight: bold;
  line-height: 11px;
}

/* taskbar */
.taskbar {
  display: flex;
  height: 34px;
  flex: none;
  background-color: #375269;
  color: #eef2f5;
  font-size: 11px;
}
.start {
  width: 40px;
}
.task {
  justify-content: flex-start;
  width: 129px;
  margin-left: 6px;
  padding-left: 6px;
  gap: 3px;
  border-bottom: 2px solid #8bbbe6;
  font-family: Roboto, "Noto Sans CJK SC", sans-serif;
}
.current-task {
  width: 134px;
  margin-left: 4px;
  padding-left: 8px;
  background-color: #1c629f;
}
.tray {
  display: flex;
  align-items: center;
  gap: 8px;
  margin-left: auto;
}
.ime {
  font-size: 12px;
  font-weight: bold;
}
.sogou {
  margin: 0 5px 0 4px;
}
.tray time {
  line-height: 16px;
  text-align: center;
}
.tray time + svg {
  margin-left: 6px;
}
.peek {
  align-self: stretch;
  width: 8px;
  margin-right: 5px;
  border-right: 1px solid #7b8d9c;
}
```
